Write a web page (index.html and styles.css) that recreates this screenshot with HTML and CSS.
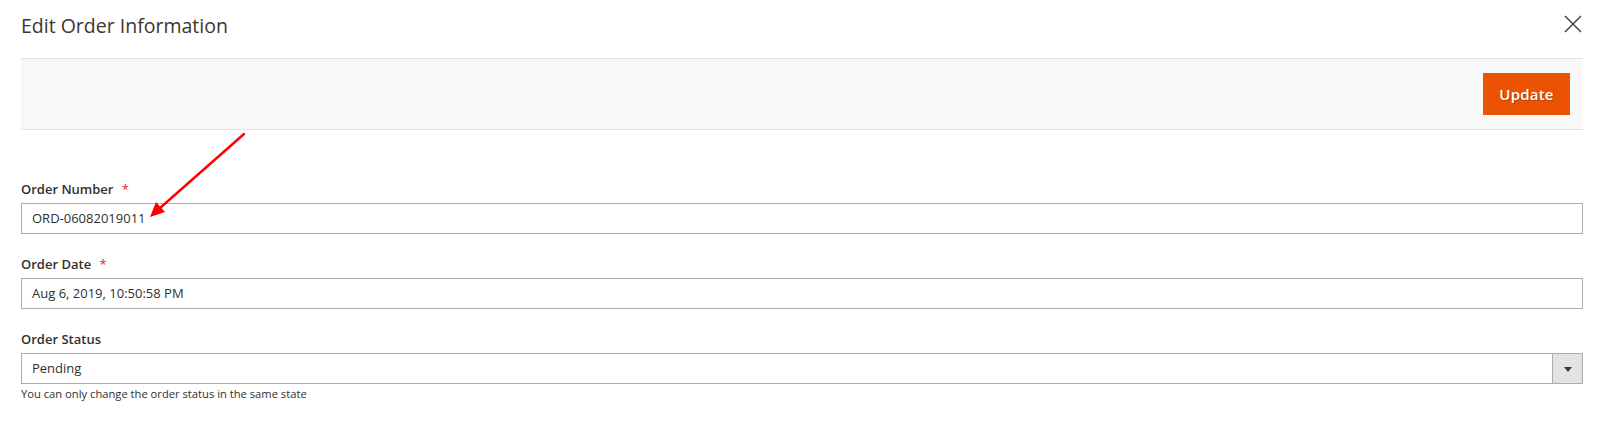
FILE: index.html
```html
<!DOCTYPE html>
<html lang="en">
<head>
<meta charset="utf-8">
<title>Edit Order Information</title>
<link rel="stylesheet" href="styles.css">
</head>
<body>
<div class="modal">
  <header class="modal-header">
    <h1 class="modal-title">Edit Order Information</h1>
    <button class="close" type="button" aria-label="Close">
      <svg width="18" height="18" viewBox="0 0 18 18"><path d="M1 1L17 17M17 1L1 17" stroke="#514943" stroke-width="1.6" fill="none"/></svg>
    </button>
  </header>
  <div class="toolbar">
    <button class="btn-primary" type="button">Update</button>
  </div>
  <form class="form">
    <div class="field">
      <label class="label">Order Number <span class="req">*</span></label>
      <div class="input">ORD-06082019011</div>
    </div>
    <div class="field">
      <label class="label">Order Date <span class="req">*</span></label>
      <div class="input">Aug 6, 2019, 10:50:58 PM</div>
    </div>
    <div class="field field-last">
      <label class="label">Order Status</label>
      <div class="select">
        <span class="select-value">Pending</span>
        <span class="select-btn"><span class="caret"></span></span>
      </div>
      <div class="note">You can only change the order status in the same state</div>
    </div>
  </form>
  <svg class="annot" width="1600" height="430" viewBox="0 0 1600 430">
    <line x1="244" y1="134" x2="160" y2="208" stroke="#f00" stroke-width="2.4" stroke-linecap="round"/>
    <polygon points="150,217 156,202 165,212" fill="#f00"/>
  </svg>
</div>
</body>
</html>
```
FILE: styles.css
```css
* { box-sizing: border-box; }
html, body { margin: 0; padding: 0; background: #fff; }
body {
  font-family: "Open Sans", "Liberation Sans", sans-serif;
  color: #303030;
}
.modal {
  position: relative;
  width: 1600px;
  height: 430px;
  padding: 0 17px 0 21px;
  overflow: hidden;
}
.modal-header {
  display: flex;
  justify-content: space-between;
  align-items: flex-start;
  padding: 13px 0 19px 0;
}
.modal-title {
  margin: 0;
  font-size: 19.5px;
  line-height: 26px;
  font-weight: 400;
  color: #41362f;
}
.close {
  border: 0;
  background: none;
  padding: 0;
  margin: 2px 1px 0 0;
  width: 18px;
  height: 18px;
  display: block;
  cursor: pointer;
}
.close svg { display: block; }
.toolbar {
  display: flex;
  justify-content: flex-end;
  background: #f8f8f8;
  border-top: 1px solid #e3e3e3;
  border-bottom: 1px solid #e3e3e3;
  padding: 14px 13px 14px 0;
}
.btn-primary {
  height: 42px;
  width: 87px;
  background: #eb5202;
  border: 1px solid #eb5202;
  color: #fff;
  font-family: "Open Sans", "Liberation Sans", sans-serif;
  font-size: 15px;
  font-weight: 600;
  letter-spacing: 0.2px;
  text-shadow: 1px 1px 0 rgba(0,0,0,0.25);
  padding: 0;
}
.form {
  margin-top: 50px;
  display: flex;
  flex-direction: column;
  gap: 21px;
}
.field { display: flex; flex-direction: column; }
.label {
  font-size: 13px;
  line-height: 18px;
  font-weight: 600;
  color: #303030;
  margin-bottom: 5px;
}
.req {
  color: #e22626;
  font-weight: 400;
  margin-left: 5px;
}
.input, .select {
  height: 31px;
  border: 1px solid #adadad;
  font-size: 13px;
  line-height: 29px;
  padding: 0 10px;
  color: #303030;
  background: #fff;
}
.select {
  display: flex;
  justify-content: space-between;
  padding: 0 0 0 10px;
}
.select-btn {
  width: 31px;
  margin: -1px -1px -1px 0;
  height: 31px;
  background: #e3e3e3;
  border: 1px solid #adadad;
  display: flex;
  align-items: center;
  justify-content: center;
}
.caret {
  width: 0;
  height: 0;
  border-left: 4px solid transparent;
  border-right: 4px solid transparent;
  border-top: 5px solid #41362f;
  margin-top: 1px;
}
.note {
  font-size: 11.2px;
  line-height: 15px;
  margin-top: 2px;
  color: #303030;
}
.annot {
  position: absolute;
  left: 0;
  top: 0;
  pointer-events: none;
}
```
